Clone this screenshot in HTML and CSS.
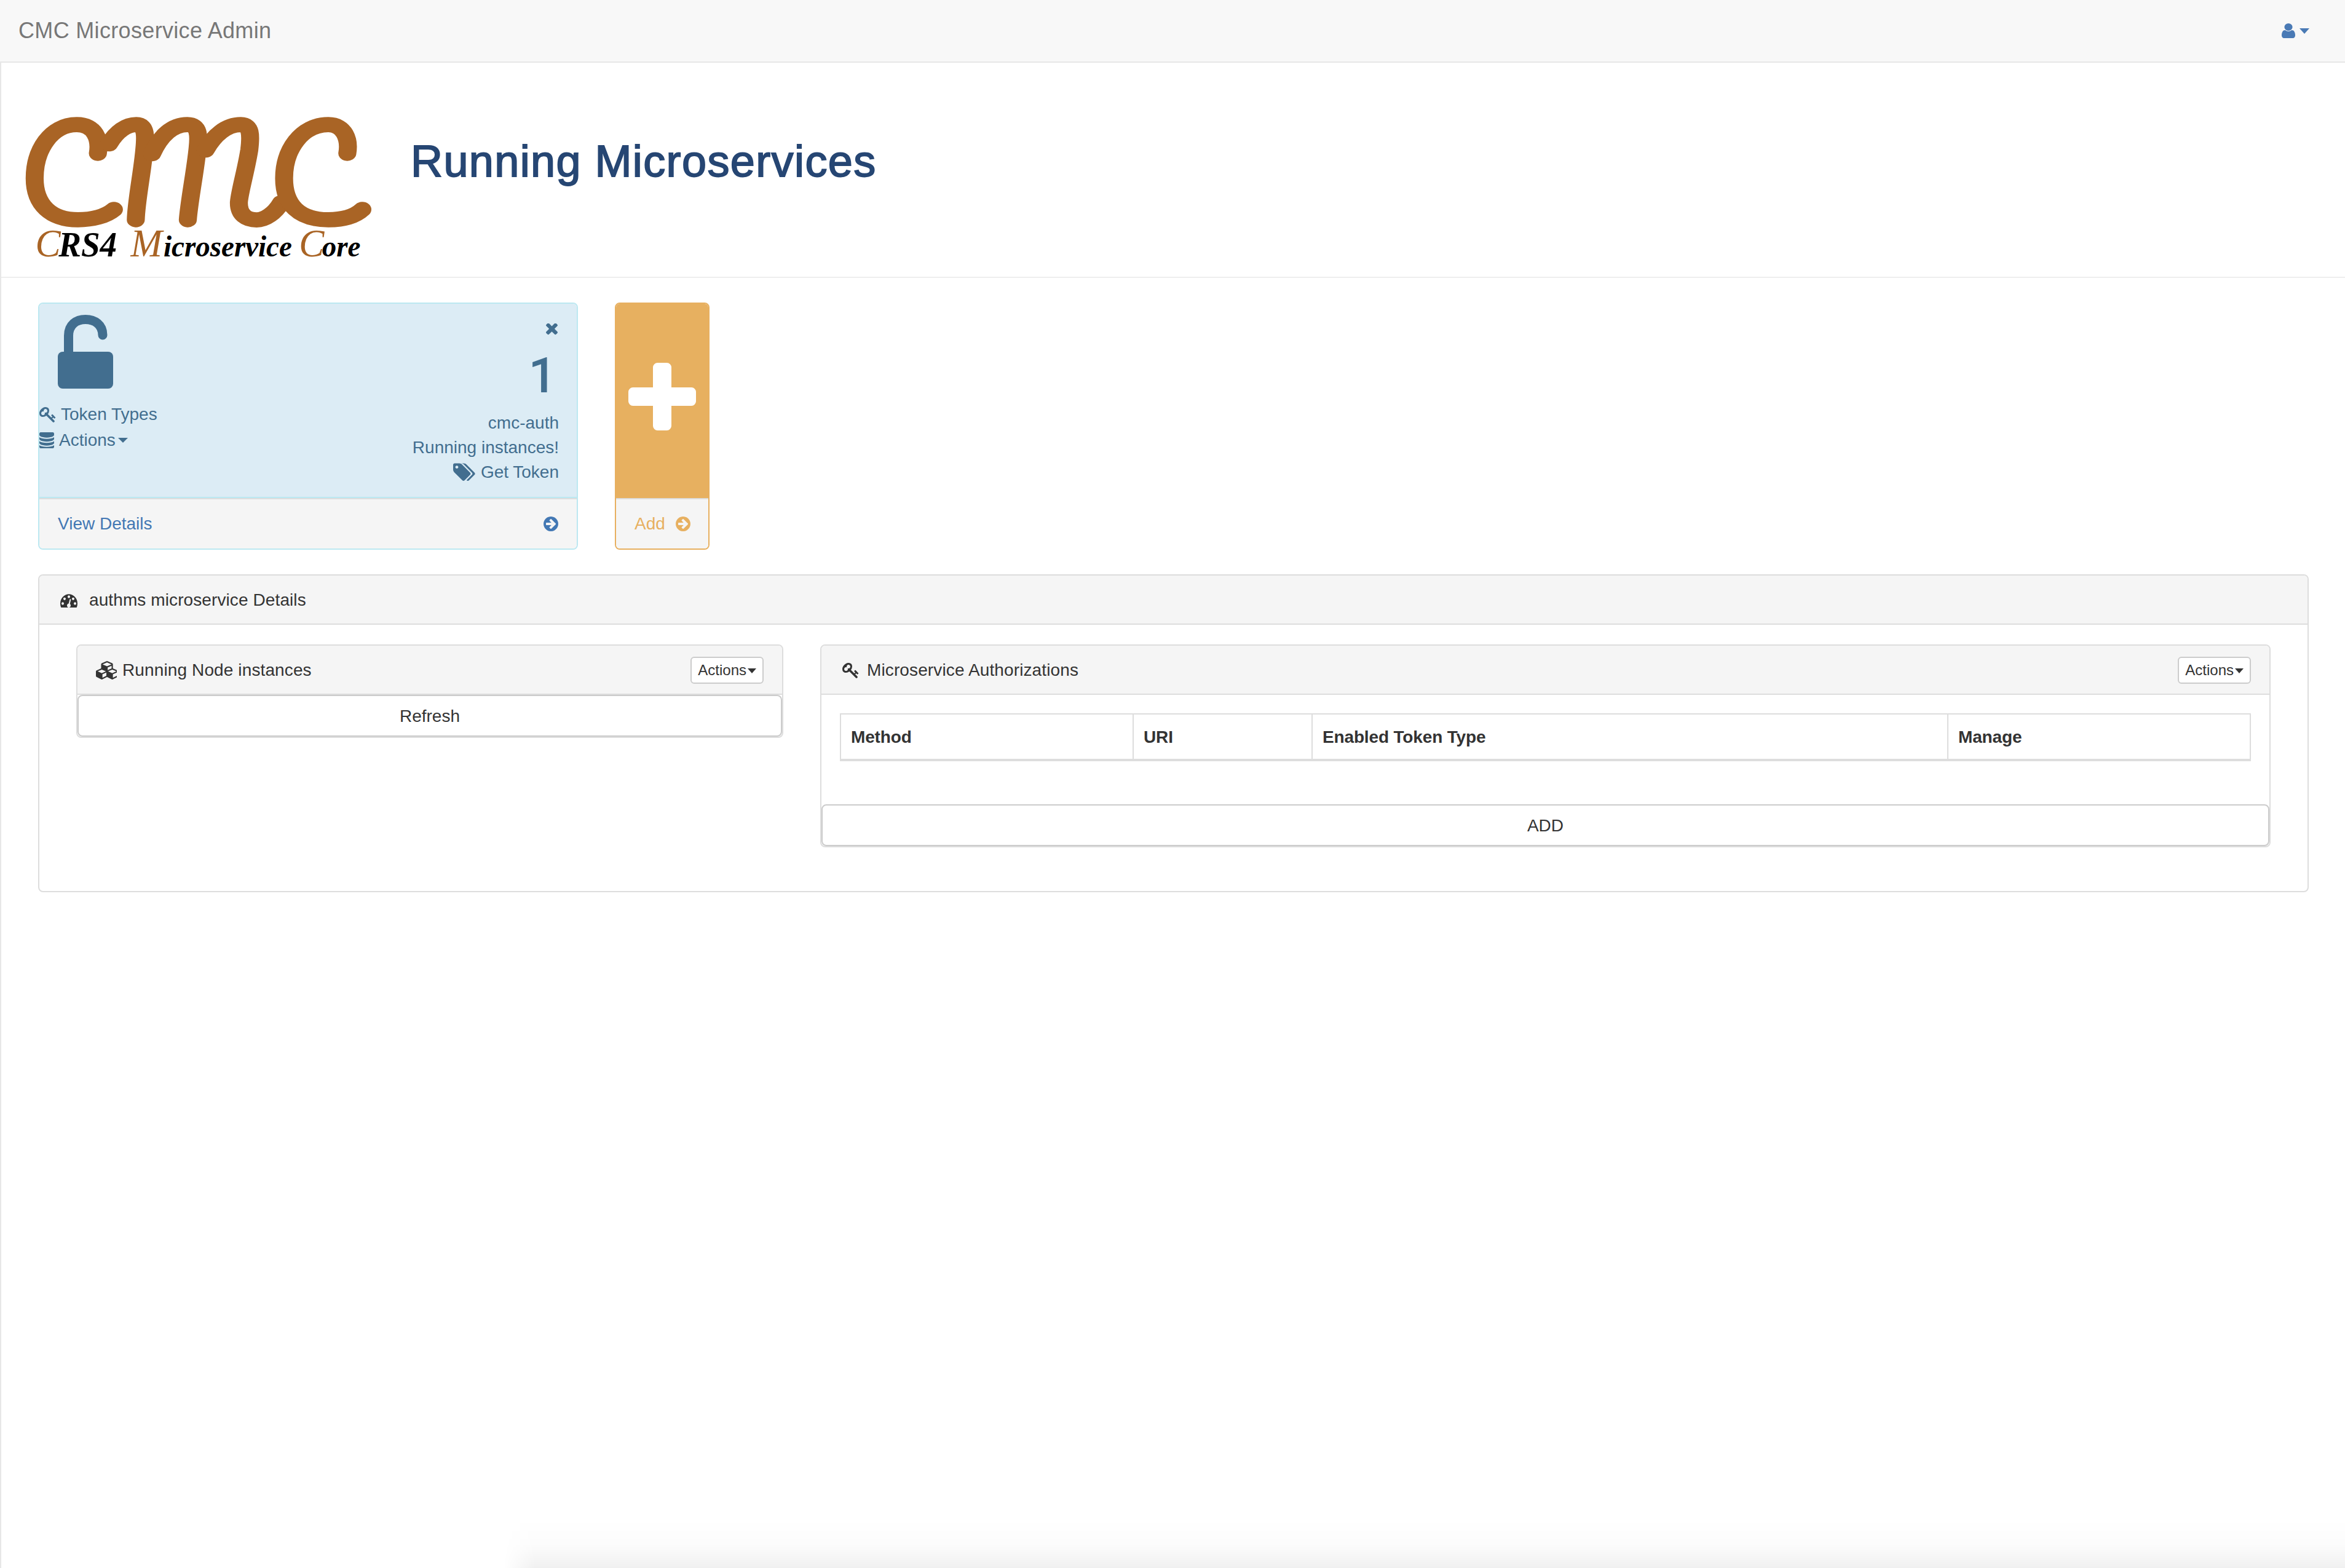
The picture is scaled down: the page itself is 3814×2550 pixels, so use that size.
FILE: index.html
```html
<!DOCTYPE html>
<html lang="en">
<head>
<meta charset="utf-8">
<title>CMC Microservice Admin</title>
<link rel="stylesheet" href="styles.css">
</head>
<body>
<nav class="navbar">
  <a class="brand">CMC Microservice Admin</a>
  <div class="nav-user">
    <svg class="ic-user" viewBox="256 128 1280 1536" preserveAspectRatio="none"><path d="M1536 1399q0 109-62.5 187t-150.5 78h-854q-88 0-150.5-78t-62.5-187q0-85 8.5-160.5t31.5-152 58.5-131 94-89 134.5-34.5q131 128 313 128t313-128q76 0 134.5 34.5t94 89 58.5 131 31.5 152 8.5 160.5zm-256-887q0 159-112.5 271.5t-271.5 112.5-271.5-112.5-112.5-271.5 112.5-271.5 271.5-112.5 271.5 112.5 112.5 271.5z"/></svg>
    <span class="caret caret-nav"></span>
  </div>
</nav>
<div class="page">
  <header class="page-header">
    <svg class="logo" viewBox="0 0 1568 810" preserveAspectRatio="none" role="img" aria-label="CMC logo">
      <g class="logo-mark">
        <path d="M352 238C362 170 340 98 265 98C160 98 92 220 92 360C92 490 160 562 270 562C330 562 385 545 418 512"/>
        <path d="M398 192C430 130 470 98 510 98C552 98 548 160 543 220C535 330 510 470 508 562"/>
        <path d="M575 240C610 150 660 98 720 98C768 98 768 150 762 215C752 330 728 470 722 562"/>
        <path d="M795 222C830 150 880 98 940 98C982 98 982 150 975 220C962 320 932 440 932 480C932 540 965 563 1005 563C1040 563 1080 530 1105 480"/>
        <path d="M1378 238C1388 170 1366 98 1300 98C1190 98 1118 220 1118 360C1118 490 1180 562 1300 562C1360 562 1410 545 1440 512"/>
      </g>
      <text class="logo-tag" transform="translate(95 742) scale(0.82 1)"><tspan class="tag-big tag-brown" x="0">C</tspan><tspan class="tag-rs" x="116">RS4</tspan><tspan class="tag-big tag-brown" x="478">M</tspan><tspan class="tag-small" x="643">icroservice</tspan><tspan class="tag-big tag-brown" x="1322">C</tspan><tspan class="tag-small" x="1438">ore</tspan></text>
    </svg>
    <h1 class="title">Running Microservices</h1>
  </header>

  <main class="content">
    <section class="cards">
      <article class="card card-info">
        <div class="card-body">
          <div class="card-left">
            <svg class="ic-lock" viewBox="0 0 90 120"><rect x="0" y="60" width="90" height="60" rx="8"/><path class="shackle" d="M17.5 65V34C17.5 16 30 7.5 45 7.5C60 7.5 73 16 73 33"/></svg>
            <div class="left-row row-token">
              <svg class="ic ic-key" viewBox="0 0 1792 1792"><path d="M832 512q0-80-56-136t-136-56-136 56-56 136q0 42 19 83-41-19-83-19-80 0-136 56t-56 136 56 136 136 56 136-56 56-136q0-42-19-83 41 19 83 19 80 0 136-56t56-136zm851 704q0 17-49 66t-66 49q-9 0-28.5-16t-36.5-33-38.5-40-24.5-26l-96 96 220 220q28 28 28 68 0 42-39 81t-81 39q-40 0-68-28l-671-671q-176 131-365 131-163 0-265.5-102.5t-102.5-265.5q0-160 95-313t248-248 313-95q163 0 265.5 102.5t102.5 265.5q0 189-131 365l355 355 96-96q-3-3-26-24.5t-40-38.5-33-36.5-16-28.5q0-17 49-66t66-49q13 0 23 10 6 6 46 44.5t82 79.5 86.5 86 73 78 28.5 41z"/></svg>
              <span>Token Types</span>
            </div>
            <div class="left-row row-actions">
              <svg class="ic-db" viewBox="128 128 1536 1536" preserveAspectRatio="none"><path d="M896 768q237 0 443-43t325-127v170q0 69-103 128t-280 93.5-385 34.5-385-34.5-280-93.5-103-128v-170q119 84 325 127t443 43zm0 768q237 0 443-43t325-127v170q0 69-103 128t-280 93.5-385 34.5-385-34.5-280-93.5-103-128v-170q119 84 325 127t443 43zm0-384q237 0 443-43t325-127v170q0 69-103 128t-280 93.5-385 34.5-385-34.5-280-93.5-103-128v-170q119 84 325 127t443 43zm0-1152q208 0 385 34.5t280 93.5 103 128v128q0 69-103 128t-280 93.5-385 34.5-385-34.5-280-93.5-103-128v-128q0-69 103-128t280-93.5 385-34.5z"/></svg>
              <span>Actions</span><span class="caret caret-card"></span>
            </div>
          </div>
          <div class="card-right">
            <svg class="ic-times" viewBox="110 302 1188 1188"><path d="M1298 1214q0 40-28 68l-136 136q-28 28-68 28t-68-28l-294-294-294 294q-28 28-68 28t-68-28l-136-136q-28-28-28-68t28-68l294-294-294-294q-28-28-28-68t28-68l136-136q28-28 68-28t68 28l294 294 294-294q28-28 68-28t68 28l136 136q28 28 28 68t-28 68l-294 294 294 294q28 28 28 68z"/></svg>
            <div class="huge">1</div>
            <div class="right-line right-first">cmc-auth</div>
            <div class="right-line">Running instances!</div>
            <div class="right-line token-line">
              <svg class="ic-tags" viewBox="0 0 1920 1792"><path d="M448 448q0-53-37.5-90.5t-90.5-37.5-90.5 37.5-37.5 90.5 37.5 90.5 90.5 37.5 90.5-37.5 37.5-90.5zm1067 576q0 53-37 90l-491 492q-39 37-91 37-53 0-90-37l-715-716q-38-37-64.5-101t-26.5-117v-416q0-52 38-90t90-38h416q53 0 117 26.5t102 64.5l715 714q37 39 37 91zm384 0q0 53-37 90l-491 492q-39 37-91 37-36 0-59-14t-53-45l470-470q37-37 37-90 0-52-37-91l-715-714q-38-38-102-64.5t-117-26.5h224q53 0 117 26.5t102 64.5l715 714q37 39 37 91z"/></svg>
              <span>Get Token</span>
            </div>
          </div>
        </div>
        <div class="card-footer footer-info">
          <span>View Details</span>
          <svg class="ic-arrow" viewBox="0 128 1536 1536"><path d="M1285 896q0-27-18-45l-91-91-362-362q-18-18-45-18t-45 18l-91 91q-18 18-18 45t18 45l189 189h-502q-26 0-45 19t-19 45v128q0 26 19 45t45 19h502l-189 189q-19 19-19 45t19 45l91 91q18 18 45 18t45-18l362-362 91-91q18-18 18-45zm251 0q0 209-103 385.5t-279.5 279.5-385.5 103-385.5-103-279.5-279.5-103-385.5 103-385.5 279.5-279.5 385.5-103 385.5 103 279.5 279.5 103 385.5z"/></svg>
        </div>
      </article>

      <article class="card card-add">
        <div class="add-body">
          <svg class="ic-plus" viewBox="192 128 1408 1408"><path d="M1600 736v192q0 40-28 68t-68 28h-416v416q0 40-28 68t-68 28h-192q-40 0-68-28t-28-68v-416h-416q-40 0-68-28t-28-68v-192q0-40 28-68t68-28h416v-416q0-40 28-68t68-28h192q40 0 68 28t28 68v416h416q40 0 68 28t28 68z"/></svg>
        </div>
        <div class="card-footer footer-add">
          <span>Add</span>
          <svg class="ic-arrow" viewBox="0 128 1536 1536"><path d="M1285 896q0-27-18-45l-91-91-362-362q-18-18-45-18t-45 18l-91 91q-18 18-18 45t18 45l189 189h-502q-26 0-45 19t-19 45v128q0 26 19 45t45 19h502l-189 189q-19 19-19 45t19 45l91 91q18 18 45 18t45-18l362-362 91-91q18-18 18-45zm251 0q0 209-103 385.5t-279.5 279.5-385.5 103-385.5-103-279.5-279.5-103-385.5 103-385.5 279.5-279.5 385.5-103 385.5 103 279.5 279.5 103 385.5z"/></svg>
        </div>
      </article>
    </section>

    <section class="panel details">
      <div class="panel-heading details-heading">
        <svg class="ic-dash" viewBox="0 128 1792 1408" preserveAspectRatio="none"><path d="M384 1152q0-53-37.5-90.5t-90.5-37.5-90.5 37.5-37.5 90.5 37.5 90.5 90.5 37.5 90.5-37.5 37.5-90.5zm192-448q0-53-37.5-90.5t-90.5-37.5-90.5 37.5-37.5 90.5 37.5 90.5 90.5 37.5 90.5-37.5 37.5-90.5zm428 481l101-382q6-26-7.5-48.5t-38.5-29.5-48 6.5-30 39.5l-101 382q-60 5-107 43.5t-63 98.5q-20 77 20 146t117 89 146-20 89-117q16-60-6-117t-72-91zm660-33q0-53-37.5-90.5t-90.5-37.5-90.5 37.5-37.5 90.5 37.5 90.5 90.5 37.5 90.5-37.5 37.5-90.5zm-640-640q0-53-37.5-90.5t-90.5-37.5-90.5 37.5-37.5 90.5 37.5 90.5 90.5 37.5 90.5-37.5 37.5-90.5zm448 192q0-53-37.5-90.5t-90.5-37.5-90.5 37.5-37.5 90.5 37.5 90.5 90.5 37.5 90.5-37.5 37.5-90.5zm320 448q0 261-141 483-19 29-54 29h-1402q-35 0-54-29-141-221-141-483 0-182 71-348t191-286 286-191 348-71 348 71 286 191 191 286 71 348z"/></svg>
        <span>authms microservice Details</span>
      </div>
      <div class="details-body">
        <div class="panel inner">
          <div class="panel-heading inner-heading">
            <div class="heading-title">
              <svg class="ic-cubes" viewBox="0 0 2048 1792"><path d="M640 1632l384-192v-314l-384 164v342zm-64-454l404-173-404-173-404 173zm1088 454l384-192v-314l-384 164v342zm-64-454l404-173-404-173-404 173zm-448-293l384-165v-266l-384 164v267zm-64-379l441-189-441-189-441 189zm1088 518v416q0 36-19 67t-52 47l-448 224q-25 14-57 14t-57-14l-448-224q-4-2-7-4-2 2-7 4l-448 224q-25 14-57 14t-57-14l-448-224q-33-16-52-47t-19-67v-416q0-38 21.5-70t56.5-48l434-186v-400q0-38 21.5-70t56.5-48l448-192q23-10 50-10t50 10l448 192q35 16 56.5 48t21.5 70v400l434 186q36 16 57 48t21 70z"/></svg>
              <span>Running Node instances</span>
            </div>
            <button class="btn-xs">Actions<span class="caret caret-btn"></span></button>
          </div>
          <button class="btn-block">Refresh</button>
        </div>

        <div class="panel inner">
          <div class="panel-heading inner-heading">
            <div class="heading-title title-key">
              <svg class="ic ic-key-dark" viewBox="0 0 1792 1792"><path d="M832 512q0-80-56-136t-136-56-136 56-56 136q0 42 19 83-41-19-83-19-80 0-136 56t-56 136 56 136 136 56 136-56 56-136q0-42-19-83 41 19 83 19 80 0 136-56t56-136zm851 704q0 17-49 66t-66 49q-9 0-28.5-16t-36.5-33-38.5-40-24.5-26l-96 96 220 220q28 28 28 68 0 42-39 81t-81 39q-40 0-68-28l-671-671q-176 131-365 131-163 0-265.5-102.5t-102.5-265.5q0-160 95-313t248-248 313-95q163 0 265.5 102.5t102.5 265.5q0 189-131 365l355 355 96-96q-3-3-26-24.5t-40-38.5-33-36.5-16-28.5q0-17 49-66t66-49q13 0 23 10 6 6 46 44.5t82 79.5 86.5 86 73 78 28.5 41z"/></svg>
              <span>Microservice Authorizations</span>
            </div>
            <button class="btn-xs">Actions<span class="caret caret-btn"></span></button>
          </div>
          <div class="table-wrap">
            <table class="auth-table">
              <thead>
                <tr>
                  <th class="col-method">Method</th>
                  <th class="col-uri">URI</th>
                  <th class="col-type">Enabled Token Type</th>
                  <th>Manage</th>
                </tr>
              </thead>
            </table>
          </div>
          <button class="btn-block">ADD</button>
        </div>
      </div>
    </section>
  </main>
</div>
<div class="window-shadow"></div>
</body>
</html>
```

FILE: styles.css
```css
* { box-sizing: border-box; }

html, body {
  margin: 0;
  height: 2550px;
  overflow: hidden;
}

body {
  position: relative;
  background: #fff;
  color: #333;
  font: 28px/40px "Liberation Sans", Arial, sans-serif;
}

svg { display: block; flex: none; fill: currentColor; }

/* Navbar */
.navbar {
  display: flex;
  align-items: center;
  justify-content: space-between;
  height: 102px;
  padding: 0 58px 0 30px;
  background: #f8f8f8;
  border-bottom: 2px solid #e7e7e7;
}
.brand { font-size: 36px; letter-spacing: 0.33px; color: #777; }
.nav-user { display: flex; align-items: center; gap: 7px; color: #4a7ab5; }
.ic-user { width: 22px; height: 24px; }

.caret {
  display: inline-block;
  width: 0;
  height: 0;
  border-style: solid;
  border-color: currentColor transparent transparent;
}
.caret-nav { border-width: 9px 8px 0; }
.caret-card { border-width: 8px 8px 0; margin-left: -4px; }
.caret-btn { border-width: 8px 7px 0; margin-left: 2px; vertical-align: 3px; }

/* Page */
.page {
  height: 2448px;
  border-left: 2px solid #e7e7e7;
}
.page-header {
  display: flex;
  align-items: flex-start;
  height: 350px;
  padding: 68px 0 0 18px;
  border-bottom: 2px solid #eee;
}
.logo { width: 620px; height: 270px; }
.logo-mark path {
  fill: none;
  stroke: #a96425;
  stroke-width: 74;
  stroke-linecap: round;
  stroke-linejoin: round;
}
.logo-tag {
  font-family: "Liberation Serif", serif;
  font-weight: 700;
  font-style: italic;
  fill: #000;
}
.tag-big { font-size: 190px; }
.tag-rs { font-size: 170px; }
.tag-small { font-size: 145px; }
.tag-brown { fill: #a96425; font-weight: 400; }

.title {
  margin: 52px 0 0 28px;
  font-size: 72px;
  line-height: 80px;
  font-weight: 400;
  letter-spacing: 1.4px;
  color: #264673;
  -webkit-text-stroke: 1.8px #264673;
}

.content { padding: 40px 59px 0 60px; }

/* Cards */
.cards { display: flex; gap: 60px; }
.card {
  display: flex;
  flex-direction: column;
  height: 402px;
  border: 2px solid #bce8f1;
  border-radius: 8px;
  overflow: hidden;
}
.card-info { width: 878px; }
.card-body {
  display: flex;
  justify-content: space-between;
  height: 316px;
  padding: 0 29px 0 0;
  background: #dcecf5;
  color: #426e8f;
  border-bottom: 2px solid #bce8f1;
}
.ic-lock { width: 90px; height: 120px; margin: 18px 0 22px 30px; }
.shackle { fill: none; stroke: currentColor; stroke-width: 15; stroke-linecap: round; }
.left-row { display: flex; align-items: center; height: 40px; }
.row-token { gap: 7px; }
.row-actions { gap: 8px; margin-top: 2px; }
.ic { width: 28px; height: 28px; }
.ic-db { width: 24px; height: 26px; }

.card-right {
  display: flex;
  flex-direction: column;
  align-items: flex-end;
  padding-top: 32px;
}
.ic-times { width: 19px; height: 19px; margin: 0 2px 22px 0; }
.huge { font-family: Roboto, "Liberation Sans", sans-serif; font-weight: 500; font-size: 80px; line-height: 88px; margin-right: 4px; }
.right-line { height: 40px; }
.right-first { margin-top: 13px; }
.token-line { display: flex; align-items: center; gap: 9px; }
.ic-tags { width: 36px; height: 34px; }

.card-footer {
  display: flex;
  align-items: center;
  flex: 1;
  background: #f5f5f5;
  border-top: 2px solid #ddd;
}
.footer-info { justify-content: space-between; padding: 0 30px; color: #4378b4; }
.ic-arrow { width: 24px; height: 24px; }

.card-add { width: 154px; border-color: #e7b060; }
.add-body {
  display: flex;
  align-items: center;
  justify-content: center;
  height: 316px;
  padding-bottom: 14px;
  background: #e7b060;
  color: #fff;
}
.ic-plus { width: 110px; height: 110px; }
.footer-add { gap: 17px; padding: 0 0 0 30px; color: #e7b060; }

/* Panels */
.panel {
  border: 2px solid #ddd;
  border-radius: 8px;
}
.panel-heading {
  display: flex;
  align-items: center;
  height: 80px;
  padding-top: 2px;
  background: #f5f5f5;
  border-bottom: 2px solid #ddd;
}
.details { margin-top: 40px; height: 517px; }
.details-heading { gap: 19px; padding-left: 34px; letter-spacing: 0.1px; border-radius: 6px 6px 0 0; }
.ic-dash { width: 28px; height: 24px; }
.details-body {
  display: grid;
  grid-template-columns: 1150px 1fr;
  gap: 60px;
  align-items: start;
  padding: 32px 60px 0;
}
.inner-heading {
  justify-content: space-between;
  padding: 2px 30px 0;
  border-radius: 6px 6px 0 0;
}
.heading-title { display: flex; align-items: center; gap: 9px; letter-spacing: 0.12px; }
.title-key { gap: 12px; margin-left: 4px; }
.ic-cubes { width: 34px; height: 30px; }
.ic-key-dark { width: 28px; height: 28px; }

.btn-xs {
  height: 44px;
  padding: 0 10px;
  font: inherit;
  font-size: 24px;
  line-height: 36px;
  color: #333;
  background: #fff;
  border: 2px solid #ccc;
  border-radius: 6px;
}
.btn-block {
  display: block;
  width: 100%;
  height: 68px;
  padding: 2px 0 0;
  font: inherit;
  color: #333;
  background: #fff;
  border: 2px solid #ccc;
  border-radius: 8px;
}

.table-wrap { padding: 30px 30px 70px; }
.auth-table {
  width: 100%;
  table-layout: fixed;
  border-collapse: collapse;
}
.auth-table th {
  padding: 17px 16px 15px;
  text-align: left;
  font-weight: 700;
  letter-spacing: -0.15px;
  border: 2px solid #ddd;
  border-bottom-width: 4px;
}
.col-method { width: 476px; }
.col-uri { width: 291px; }
.col-type { width: 1034px; }

/* Desktop window shadow along the lower edge */
.window-shadow {
  position: absolute;
  top: 2470px;
  left: 820px;
  right: 0;
  height: 80px;
  background: linear-gradient(to bottom, rgba(0, 0, 0, 0), rgba(0, 0, 0, 0.012) 50%, rgba(0, 0, 0, 0.03) 75%, rgba(0, 0, 0, 0.06));
  -webkit-mask-image: linear-gradient(to right, transparent, #000 50px);
  mask-image: linear-gradient(to right, transparent, #000 50px);
  pointer-events: none;
}
```
